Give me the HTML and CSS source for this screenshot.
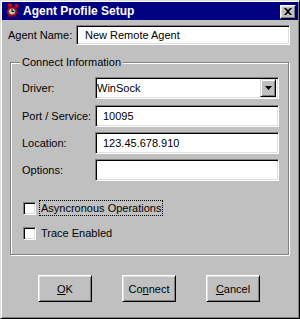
FILE: index.html
```html
<!DOCTYPE html>
<html>
<head>
  <meta charset="UTF-8">
  <title>Agent Profile Setup</title>
  <link rel="stylesheet" href="styles.css">
</head>
<body>

  <div class="window">
    <!-- title bar -->
    <div class="titlebar">
      <svg class="app-icon" viewBox="0 0 16 16">
        <circle cx="4" cy="2.5" r="2.2" fill="#e00000"/>
        <circle cx="10.5" cy="2.8" r="2" fill="#e00000"/>
        <path d="M2.5 13 L1.5 15 M9.5 13 L10.5 15" stroke="#800000" stroke-width="1.2"/>
        <circle cx="6" cy="8.5" r="5.2" fill="#c00000"/>
        <circle cx="6" cy="8.5" r="3.6" fill="#c0c0c0" stroke="#400000" stroke-width="0.6"/>
        <path d="M6 8.5 V5.8 M6 8.5 H8.2" stroke="#000" stroke-width="1"/>
      </svg>
      <span class="title">Agent Profile Setup</span>
      <div class="close">
        <svg viewBox="0 0 8 7" width="8" height="7">
          <path d="M0 0h2l2 2 2-2h2L5 3.5 8 7H6L4 5 2 7H0l3-3.5z" fill="#000"/>
        </svg>
      </div>
    </div>

    <div class="content">
      <div class="name-row">
        <label class="name-label">Agent Name:</label>
        <div class="field name-field">New Remote Agent</div>
      </div>

      <!-- connect information group -->
      <div class="group">
        <span class="legend">Connect Information</span>
        <div class="row combo-row">
          <label>Driver:</label>
          <div class="field combo">
            <span class="combo-text">WinSock</span>
            <span class="drop">
              <svg viewBox="0 0 7 4" width="7" height="4"><polygon points="0,0 7,0 3.5,4" fill="#000"/></svg>
            </span>
          </div>
        </div>
        <div class="row">
          <label>Port / Service:</label>
          <div class="field edit">10095</div>
        </div>
        <div class="row">
          <label>Location:</label>
          <div class="field edit">123.45.678.910</div>
        </div>
        <div class="row">
          <label>Options:</label>
          <div class="field edit"></div>
        </div>

        <div class="check">
          <span class="box"></span>
          <span class="check-label focused">Asyncronous Operations</span>
        </div>
        <div class="check check2">
          <span class="box"></span>
          <span class="check-label">Trace Enabled</span>
        </div>
      </div>

      <div class="buttons">
        <div class="btn"><u>O</u>K</div>
        <div class="btn">Co<u>n</u>nect</div>
        <div class="btn"><u>C</u>ancel</div>
      </div>
    </div>
  </div>

</body>
</html>
```

FILE: styles.css
```css
body {
  margin: 0;
  background: #c0c0c0;
  font-family: "Liberation Sans", Arial, sans-serif;
  font-size: 11px;
  color: #000;
}
.window {
  width: 300px;
  height: 319px;
  box-sizing: border-box;
  border: 1px solid;
  border-color: #dfdfdf #000 #000 #dfdfdf;
  box-shadow: inset 1px 1px #fff, inset -1px -1px #808080;
  padding: 1px;
  background: #c0c0c0;
}
.titlebar {
  height: 18px;
  background: #000080;
  display: flex;
  align-items: center;
  color: #fff;
}
.app-icon {
  width: 16px;
  height: 16px;
  margin-left: 4px;
  margin-right: 1px;
}
.title {
  flex: 1;
  font-weight: bold;
  font-size: 12px;
}
.close {
  width: 16px;
  height: 14px;
  box-sizing: border-box;
  margin: 1px 2px 0 0;
  background: #c0c0c0;
  border: 1px solid;
  border-color: #fff #000 #000 #fff;
  box-shadow: inset -1px -1px #808080, inset 1px 1px #dfdfdf;
  display: flex;
  align-items: center;
  justify-content: center;
}
.content {
  padding: 0 6px;
}
.name-row {
  display: flex;
  align-items: center;
  margin-top: 5px;
}
.name-label {
  width: 68px;
}
.field {
  box-sizing: border-box;
  background: #fff;
  border: 1px solid;
  border-color: #808080 #fff #fff #808080;
  box-shadow: inset 1px 1px #000, inset -1px -1px #dfdfdf;
  display: flex;
  align-items: center;
}
.name-field {
  width: 214px;
  height: 20px;
  padding-left: 8px;
}
.group {
  position: relative;
  box-sizing: border-box;
  width: 279px;
  height: 193px;
  margin: 17px 0 0 2px;
  padding: 14px 0 0 11px;
  border: 1px solid #808080;
  box-shadow: inset 1px 1px #fff, 1px 1px #fff;
}
.legend {
  position: absolute;
  top: -7px;
  left: 9px;
  padding: 0 2px;
  line-height: 13px;
  background: #c0c0c0;
}
.row {
  display: flex;
  align-items: center;
  margin-top: 5px;
}
.row label {
  width: 73px;
}
.combo-row {
  margin-top: 0;
  margin-bottom: 6px;
}
.row .field {
  width: 184px;
  height: 22px;
}
.edit {
  padding-left: 7px;
}
.combo {
  justify-content: space-between;
  padding: 2px 2px 2px 1px;
}
.drop {
  width: 16px;
  height: 18px;
  box-sizing: border-box;
  background: #c0c0c0;
  border: 1px solid;
  border-color: #dfdfdf #000 #000 #dfdfdf;
  box-shadow: inset 1px 1px #fff, inset -1px -1px #808080;
  display: flex;
  align-items: center;
  justify-content: center;
}
.check {
  display: flex;
  align-items: center;
  height: 16px;
  margin-top: 19px;
}
.check2 {
  margin-top: 9px;
}
.box {
  width: 13px;
  height: 13px;
  box-sizing: border-box;
  margin: 0 3px 0 1px;
  background: #fff;
  border: 1px solid;
  border-color: #808080 #fff #fff #808080;
  box-shadow: inset 1px 1px #000, inset -1px -1px #dfdfdf;
}
.check-label {
  border: 1px dotted transparent;
  padding: 0 1px;
  line-height: 14px;
}
.check-label.focused {
  border-color: #000;
}
.buttons {
  display: flex;
  gap: 30px;
  margin-top: 20px;
  padding-left: 30px;
}
.btn {
  width: 54px;
  height: 27px;
  box-sizing: border-box;
  border: 1px solid;
  border-color: #fff #000 #000 #fff;
  box-shadow: inset 1px 1px #dfdfdf, inset -1px -1px #808080;
  display: flex;
  align-items: center;
  justify-content: center;
}
```
